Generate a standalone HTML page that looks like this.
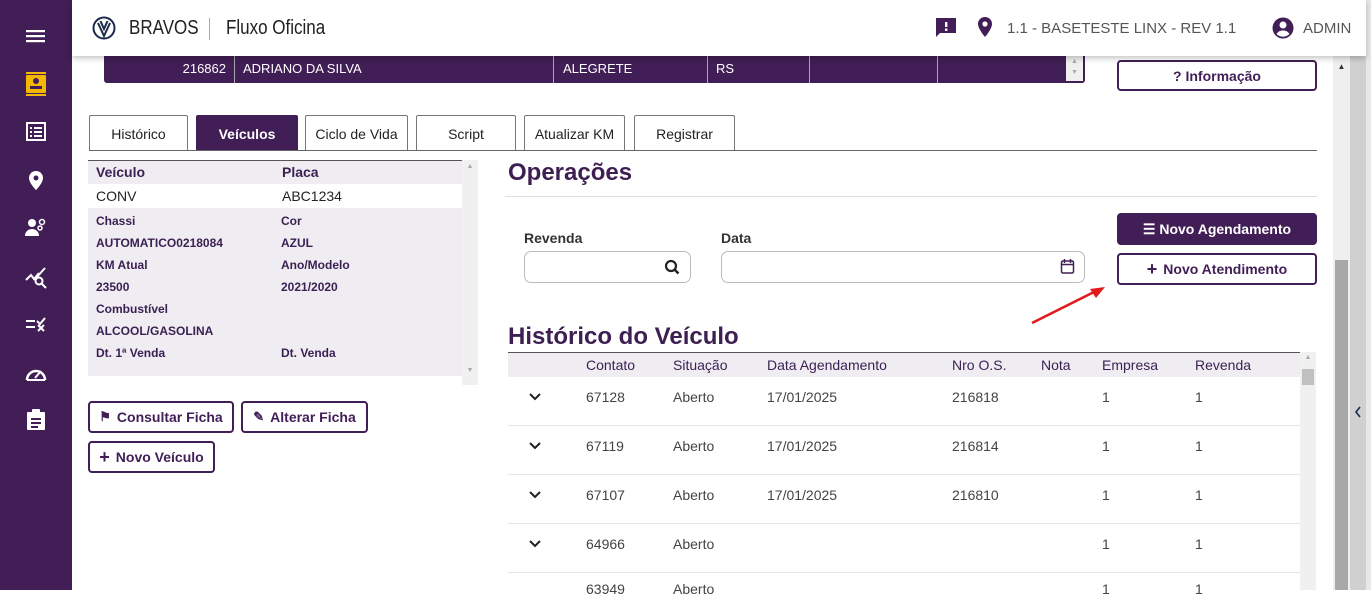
<!DOCTYPE html>
<html><head><meta charset="utf-8"><style>
*{box-sizing:border-box;margin:0;padding:0}
body{width:1371px;height:590px;overflow:hidden;background:#fff;font-family:"Liberation Sans",sans-serif;position:relative;color:#333}
.a{position:absolute}
.side{left:0;top:0;width:72px;height:590px;background:#411e56}
.hdr{left:72px;top:0;width:1294px;height:56px;background:#fff;box-shadow:0 2px 6px rgba(0,0,0,.25);z-index:3}
.btn{position:absolute;border:2px solid #411e56;border-radius:4px;background:#fff;color:#411e56;font-weight:bold;font-size:14px;display:flex;align-items:center;justify-content:center;gap:6px}
.btn.f{background:#411e56;color:#fff}
.tab{position:absolute;top:115px;height:36px;border:1px solid #777;border-bottom:none;font-size:14px;display:flex;align-items:center;justify-content:center;color:#222;background:#fff;border-radius:2px 2px 0 0}
.lbl{position:absolute;font-size:12px;font-weight:bold;color:#3a1f52}
.th{position:absolute;top:357px;font-size:14px;color:#3a1f52}
.td{position:absolute;font-size:14px;color:#444}
.w{fill:#fff}
</style></head><body>
<div class="a side"></div>
<svg class="a" style="left:0;top:0" width="72" height="440">
<rect x="26" y="30" width="19" height="2.2" class="w"/><rect x="26" y="35" width="19" height="2.2" class="w"/><rect x="26" y="40" width="19" height="2.2" class="w"/>
<rect x="26" y="72" width="20" height="2" fill="#f5b800"/><rect x="26" y="75" width="20" height="18" rx="1" fill="#f5b800"/><rect x="26" y="94" width="20" height="2" fill="#f5b800"/>
<circle cx="36" cy="81" r="3" fill="#411e56"/><rect x="30" y="86" width="12" height="3" fill="#411e56"/>
<rect x="27" y="123" width="18" height="17" fill="none" stroke="#fff" stroke-width="2"/><rect x="30" y="127" width="2" height="2" class="w"/><rect x="34" y="127" width="8" height="2" class="w"/><rect x="30" y="131" width="2" height="2" class="w"/><rect x="34" y="131" width="8" height="2" class="w"/><rect x="30" y="135" width="2" height="2" class="w"/><rect x="34" y="135" width="8" height="2" class="w"/>
<path d="M36 171a7 7 0 0 1 7 7c0 5-7 12-7 12s-7-7-7-12a7 7 0 0 1 7-7z" class="w"/><circle cx="36" cy="178" r="2.5" fill="#411e56"/>
<circle cx="32" cy="223" r="4" class="w"/><path d="M25 236c0-5 4-7 7-7s7 2 7 7z" class="w"/><circle cx="42" cy="222" r="2.5" fill="none" stroke="#fff" stroke-width="1.5"/><circle cx="40" cy="228" r="2" fill="none" stroke="#fff" stroke-width="1.5"/>
<path d="M26 280l5-5 3 4 5-6M36 278l9-10" stroke="#fff" stroke-width="2" fill="none"/><circle cx="39" cy="281" r="3.5" fill="none" stroke="#fff" stroke-width="2"/><path d="M42 284l4 4" stroke="#fff" stroke-width="2"/>
<rect x="26" y="320" width="9" height="2" class="w"/><rect x="26" y="326" width="9" height="2" class="w"/><path d="M37 321l3 3 5-6M38 325l6 6M44 325l-6 6" stroke="#fff" stroke-width="2" fill="none"/>
<path d="M27 380a9 9 0 1 1 18 0" stroke="#fff" stroke-width="2.5" fill="none"/><path d="M27 380h18" stroke="#fff" stroke-width="2"/><path d="M35 378l6-7" stroke="#fff" stroke-width="2"/>
<rect x="27" y="412" width="18" height="18" rx="1" class="w"/><rect x="32" y="409" width="8" height="5" rx="1" class="w"/><rect x="31" y="418" width="10" height="2" fill="#411e56"/><rect x="31" y="422" width="10" height="2" fill="#411e56"/><rect x="31" y="426" width="7" height="2" fill="#411e56"/>
</svg>
<div class="a hdr">
<svg class="a" style="left:20px;top:16px" width="24" height="24"><circle cx="12" cy="12" r="10.5" fill="none" stroke="#1c2a4a" stroke-width="2"/><path d="M6 7l6 13 6-13M8.5 5l3.5 8 3.5-8" stroke="#1c2a4a" stroke-width="2" fill="none"/></svg>
<div class="a" style="left:57px;top:17px;font-size:20px;color:#222;transform:scaleX(.85);transform-origin:0 0">BRAVOS</div>
<div class="a" style="left:137px;top:18px;width:1px;height:22px;background:#aaa"></div>
<div class="a" style="left:154px;top:17px;font-size:20px;color:#222;transform:scaleX(.85);transform-origin:0 0">Fluxo Oficina</div>
<svg class="a" style="left:863px;top:17px" width="22" height="22"><path d="M1 1h20v15H5l-4 4z" fill="#411e56"/><rect x="10" y="5" width="2.4" height="5" class="w"/><rect x="10" y="11.5" width="2.4" height="2.4" class="w"/></svg>
<svg class="a" style="left:905px;top:16px" width="16" height="22"><path d="M8 1a7 7 0 0 1 7 7c0 5-7 13-7 13S1 13 1 8a7 7 0 0 1 7-7z" fill="#411e56"/><circle cx="8" cy="8" r="2.6" class="w"/></svg>
<div class="a" style="left:935px;top:20px;font-size:15px;color:#555">1.1 - BASETESTE LINX - REV 1.1</div>
<svg class="a" style="left:1200px;top:17px" width="22" height="22"><circle cx="11" cy="11" r="10.5" fill="#411e56"/><circle cx="11" cy="8" r="3.5" class="w"/><path d="M4.5 17c2-3 4-3.5 6.5-3.5s4.5.5 6.5 3.5a9 9 0 0 1-13 0z" class="w"/></svg>
<div class="a" style="left:1231px;top:20px;font-size:15px;color:#555">ADMIN</div>
</div>
<div class="a" style="left:104px;top:56px;width:981px;height:27px;background:#411e56;color:#fff;font-size:13px;border-radius:0 0 3px 3px">
<div class="a" style="left:0;top:5px;width:122px;text-align:right">216862</div>
<div class="a" style="left:130px;top:0;width:1px;height:27px;background:#aaa"></div>
<div class="a" style="left:139px;top:5px">ADRIANO DA SILVA</div>
<div class="a" style="left:449px;top:0;width:1px;height:27px;background:#aaa"></div>
<div class="a" style="left:459px;top:5px">ALEGRETE</div>
<div class="a" style="left:603px;top:0;width:1px;height:27px;background:#aaa"></div>
<div class="a" style="left:612px;top:5px">RS</div>
<div class="a" style="left:705px;top:0;width:1px;height:27px;background:#aaa"></div>
<div class="a" style="left:833px;top:0;width:1px;height:27px;background:#aaa"></div>
<div class="a" style="left:962px;top:0;width:17px;height:25px;background:#f0f0f0;color:#aaa;font-size:7px;text-align:center;line-height:11px">▲<br>▼</div>
</div>
<div class="btn" style="left:1117px;top:60px;width:200px;height:31px">? Informação</div>
<div class="tab" style="left:89px;width:99px">Histórico</div>
<div class="tab" style="left:196px;width:102px;background:#411e56;color:#fff;font-weight:bold;border-color:#411e56">Veículos</div>
<div class="tab" style="left:305px;width:103px">Ciclo de Vida</div>
<div class="tab" style="left:416px;width:100px">Script</div>
<div class="tab" style="left:524px;width:101px">Atualizar KM</div>
<div class="tab" style="left:634px;width:101px">Registrar</div>
<div class="a" style="left:89px;top:150px;width:1228px;height:1px;background:#666"></div>
<div class="a" style="left:88px;top:160px;width:374px;height:216px;background:#efedf2;border-top:1px solid #555"></div>
<div class="a" style="left:88px;top:184px;width:374px;height:24px;background:#fff"></div>
<div class="a" style="left:462px;top:160px;width:16px;height:225px;background:#f0f0f0;color:#aaa;font-size:7px;text-align:center"><div style="margin-top:3px">▲</div><div style="margin-top:197px">▼</div></div>
<div class="a" style="left:96px;top:164px;font-size:14px;font-weight:bold;color:#3a1f52">Veículo</div>
<div class="a" style="left:282px;top:164px;font-size:14px;font-weight:bold;color:#3a1f52">Placa</div>
<div class="a" style="left:96px;top:188px;font-size:14px;color:#222">CONV</div>
<div class="a" style="left:282px;top:188px;font-size:14px;color:#222">ABC1234</div>
<div class="lbl" style="left:96px;top:214px">Chassi</div><div class="lbl" style="left:281px;top:214px">Cor</div>
<div class="lbl" style="left:96px;top:236px">AUTOMATICO0218084</div><div class="lbl" style="left:281px;top:236px">AZUL</div>
<div class="lbl" style="left:96px;top:258px">KM Atual</div><div class="lbl" style="left:281px;top:258px">Ano/Modelo</div>
<div class="lbl" style="left:96px;top:280px">23500</div><div class="lbl" style="left:281px;top:280px">2021/2020</div>
<div class="lbl" style="left:96px;top:302px">Combustível</div>
<div class="lbl" style="left:96px;top:324px">ALCOOL/GASOLINA</div>
<div class="lbl" style="left:96px;top:346px">Dt. 1ª Venda</div><div class="lbl" style="left:281px;top:346px">Dt. Venda</div>
<div class="btn" style="left:88px;top:401px;width:146px;height:32px"><span style="font-size:13px">⚑</span>Consultar Ficha</div>
<div class="btn" style="left:241px;top:401px;width:127px;height:32px"><span style="font-size:13px">✎</span>Alterar Ficha</div>
<div class="btn" style="left:88px;top:441px;width:127px;height:32px"><span style="font-size:18px">+</span>Novo Veículo</div>
<div class="a" style="left:508px;top:159px;font-size:24px;font-weight:bold;color:#3d1f52">Operações</div>
<div class="a" style="left:505px;top:196px;width:812px;height:1px;background:#ddd"></div>
<div class="a" style="left:524px;top:230px;font-size:14px;font-weight:bold;color:#333">Revenda</div>
<div class="a" style="left:524px;top:251px;width:167px;height:32px;border:1px solid #bbb;border-radius:7px"></div>
<svg class="a" style="left:664px;top:259px" width="16" height="16"><circle cx="7" cy="7" r="5" fill="none" stroke="#222" stroke-width="2.2"/><path d="M10.5 10.5l4 4" stroke="#222" stroke-width="2.5"/></svg>
<div class="a" style="left:721px;top:230px;font-size:14px;font-weight:bold;color:#333">Data</div>
<div class="a" style="left:721px;top:251px;width:364px;height:32px;border:1px solid #bbb;border-radius:7px"></div>
<svg class="a" style="left:1060px;top:258px" width="15" height="17"><rect x="1.5" y="3" width="12" height="12" rx="1.5" fill="none" stroke="#411e56" stroke-width="1.5"/><path d="M1.5 6.5h12M4.5 1v4M10.5 1v4" stroke="#411e56" stroke-width="1.5"/></svg>
<div class="btn f" style="left:1117px;top:213px;width:200px;height:32px">☰ Novo Agendamento</div>
<div class="btn" style="left:1117px;top:253px;width:200px;height:32px"><span style="font-size:18px">+</span>Novo Atendimento</div>
<svg class="a" style="left:1028px;top:283px" width="80" height="45"><path d="M4 40L68 8" stroke="#e21a1a" stroke-width="2.5"/><path d="M77 4L62 6l6 9z" fill="#e21a1a"/></svg>
<div class="a" style="left:508px;top:323px;font-size:24px;font-weight:bold;color:#3d1f52">Histórico do Veículo</div>
<div class="a" style="left:508px;top:352px;width:792px;height:25px;background:#efedf2;border-top:1px solid #555"></div>
<div class="a" style="left:1300px;top:352px;width:16px;height:238px;background:#f0f0f0"><div style="color:#aaa;font-size:7px;text-align:center;margin-top:2px">▲</div><div style="position:absolute;left:2px;top:17px;width:12px;height:16px;background:#c0c0c0"></div></div>
<div class="th" style="left:586px">Contato</div><div class="th" style="left:673px">Situação</div><div class="th" style="left:767px">Data Agendamento</div><div class="th" style="left:952px">Nro O.S.</div><div class="th" style="left:1041px">Nota</div><div class="th" style="left:1102px">Empresa</div><div class="th" style="left:1195px">Revenda</div>
<div class="a" style="left:508px;top:425px;width:792px;height:1px;background:#e5e5e5"></div>
<div class="a" style="left:508px;top:474px;width:792px;height:1px;background:#e5e5e5"></div>
<div class="a" style="left:508px;top:523px;width:792px;height:1px;background:#e5e5e5"></div>
<div class="a" style="left:508px;top:572px;width:792px;height:1px;background:#e5e5e5"></div>
<svg class="a" style="left:528px;top:390px" width="16" height="170"><path d="M2 4l5 5 5-5M2 53l5 5 5-5M2 102l5 5 5-5M2 151l5 5 5-5" stroke="#222" stroke-width="2" fill="none"/></svg>
<div class="td" style="left:586px;top:389px">67128</div><div class="td" style="left:673px;top:389px">Aberto</div><div class="td" style="left:767px;top:389px">17/01/2025</div><div class="td" style="left:952px;top:389px">216818</div><div class="td" style="left:1102px;top:389px">1</div><div class="td" style="left:1195px;top:389px">1</div>
<div class="td" style="left:586px;top:438px">67119</div><div class="td" style="left:673px;top:438px">Aberto</div><div class="td" style="left:767px;top:438px">17/01/2025</div><div class="td" style="left:952px;top:438px">216814</div><div class="td" style="left:1102px;top:438px">1</div><div class="td" style="left:1195px;top:438px">1</div>
<div class="td" style="left:586px;top:487px">67107</div><div class="td" style="left:673px;top:487px">Aberto</div><div class="td" style="left:767px;top:487px">17/01/2025</div><div class="td" style="left:952px;top:487px">216810</div><div class="td" style="left:1102px;top:487px">1</div><div class="td" style="left:1195px;top:487px">1</div>
<div class="td" style="left:586px;top:536px">64966</div><div class="td" style="left:673px;top:536px">Aberto</div><div class="td" style="left:1102px;top:536px">1</div><div class="td" style="left:1195px;top:536px">1</div>
<div class="td" style="left:586px;top:581px">63949</div><div class="td" style="left:673px;top:581px">Aberto</div><div class="td" style="left:1102px;top:581px">1</div><div class="td" style="left:1195px;top:581px">1</div>
<div class="a" style="left:1333px;top:56px;width:17px;height:534px;background:#efefef"><div style="color:#333;font-size:8px;text-align:center;margin-top:6px">▲</div><div style="position:absolute;left:2px;top:204px;width:13px;height:330px;background:#a8a8a8"></div></div>
<div class="a" style="left:1350px;top:0;width:16px;height:590px;background:#d0d0d0"></div>
<div class="a" style="left:1366px;top:0;width:5px;height:590px;background:#e8e8e8"></div>
<svg class="a" style="left:1354px;top:406px" width="8" height="12"><path d="M6 1L2 6l4 5" stroke="#1c2a4a" stroke-width="1.6" fill="none"/></svg>
</body></html>
